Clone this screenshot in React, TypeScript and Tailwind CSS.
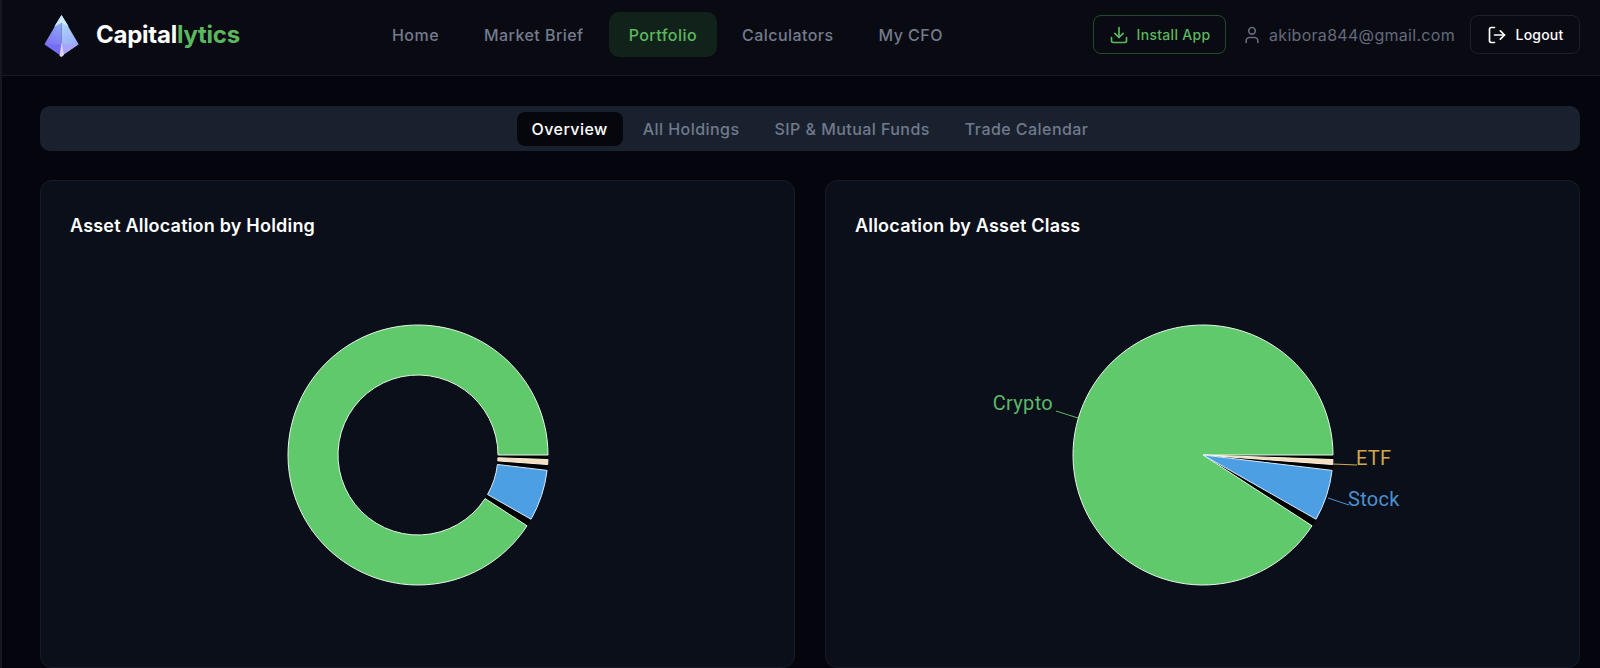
import { Download, LogOut, User } from 'lucide-react'

const CX = 150
const CY = 150
const GREEN = '#60c96c'
const BLUE = '#4c9fe3'

const NAV = ['Home', 'Market Brief', 'Portfolio', 'Calculators', 'My CFO']
const TABS = ['Overview', 'All Holdings', 'SIP & Mutual Funds', 'Trade Calendar']

/* slices in degrees, clockwise from 3 o'clock */
const SLICES = [
  { from: 33, to: 360, fill: GREEN, stroke: '#e6f6e7' },
  { from: 2, to: 4.2, fill: '#f0dfc0', stroke: '#fff4df' },
  { from: 6.8, to: 29.6, fill: BLUE, stroke: '#d8ebfb' },
]
const GAPS = [
  { from: 0, to: 2 },
  { from: 4.2, to: 6.8 },
  { from: 29.6, to: 33 },
]

function pt(r: number, deg: number) {
  const a = (deg * Math.PI) / 180
  return `${(CX + r * Math.cos(a)).toFixed(2)} ${(CY + r * Math.sin(a)).toFixed(2)}`
}

function slicePath(inner: number, outer: number, from: number, to: number) {
  const large = to - from > 180 ? 1 : 0
  if (inner === 0) {
    return `M${CX} ${CY} L${pt(outer, from)} A${outer} ${outer} 0 ${large} 1 ${pt(outer, to)} Z`
  }
  return `M${pt(inner, from)} L${pt(outer, from)} A${outer} ${outer} 0 ${large} 1 ${pt(outer, to)} L${pt(inner, to)} A${inner} ${inner} 0 ${large} 0 ${pt(inner, from)} Z`
}

function PieShape({ inner }: { inner: number }) {
  return (
    <>
      {GAPS.map((g) => (
        <path key={g.from} d={slicePath(inner, 130, g.from, g.to)} fill="#000" />
      ))}
      {SLICES.map((s) => (
        <path key={s.from} d={slicePath(inner, 130, s.from, s.to)} fill={s.fill} stroke={s.stroke} strokeWidth="1" />
      ))}
    </>
  )
}

function Logo() {
  return (
    <svg width="36" height="42" viewBox="0 0 36 43" className="mt-[2px] shrink-0">
      <defs>
        <linearGradient id="lg-left" x1="0.5" y1="0" x2="0.3" y2="1">
          <stop offset="0" stopColor="#8fb4f8" />
          <stop offset="1" stopColor="#7a5cf2" />
        </linearGradient>
        <linearGradient id="lg-right" x1="0.5" y1="0" x2="0.7" y2="1">
          <stop offset="0" stopColor="#b5ddfb" />
          <stop offset="1" stopColor="#8f9df7" />
        </linearGradient>
      </defs>
      <polygon points="17.5,0 0,30 17.5,42" fill="url(#lg-left)" />
      <polygon points="17.5,0 35,30 17.5,42" fill="url(#lg-right)" />
      <polygon points="17.5,0 10,12 17.5,8 25,12" fill="#cfeafc" />
      <polygon points="0,30 17.5,42 17.5,30" fill="#7170f6" />
      <polygon points="35,30 17.5,42 17.5,30" fill="#a8a4f9" />
      <polygon points="17.5,28 15.5,42 17.5,43 20,41" fill="#e0d2fc" />
    </svg>
  )
}

export default function App() {
  return (
    <div className="box-border h-[668px] w-[1600px] overflow-hidden border-l-2 border-[#16181f] bg-[#05060d] font-['Inter',sans-serif]">
      <header className="flex h-[76px] items-center border-b border-[#171a28] bg-[#090a12] pb-[6px] pl-[42px] pr-5">
        <div className="flex w-[328px] items-center gap-4">
          <Logo />
          <span className="text-[24px] font-bold tracking-[-0.25px] text-white">
            Capital<span className="text-[#5cb85f]">lytics</span>
          </span>
        </div>
        <nav className="flex items-center gap-[5px]">
          {NAV.map((item) => (
            <a
              key={item}
              className={
                item === 'Portfolio'
                  ? 'flex h-[45px] items-center rounded-[10px] bg-[#11221a] px-5 text-[16px] font-medium tracking-[0.45px] text-[#5cb85f]'
                  : 'flex h-[45px] items-center rounded-[10px] px-5 text-[16px] font-medium tracking-[0.45px] text-[#737b8c]'
              }
            >
              {item}
            </a>
          ))}
        </nav>
        <div className="ml-auto flex items-center">
          <button className="flex h-[39px] w-[133px] items-center justify-center gap-2 rounded-lg border border-[#244a2c] text-[14px] font-medium tracking-[0.3px] text-[#5cb85f]">
            <Download size={20} />
            Install App
          </button>
          <div className="ml-4 flex items-center gap-[7px] text-[16px] tracking-[0.3px] text-[#646b7c]">
            <User size={20} />
            akibora844@gmail.com
          </div>
          <button className="ml-[15px] flex h-[39px] w-[110px] items-center justify-center gap-[9px] rounded-lg border border-[#1c1f2c] text-[14px] font-medium tracking-[0.2px] text-white">
            <LogOut size={20} />
            Logout
          </button>
        </div>
      </header>

      <main className="pl-[38px] pr-5 pt-[30px]">
        <div className="flex h-[45px] items-center justify-center gap-[5px] rounded-[10px] bg-[#1a212e]">
          {TABS.map((tab) => (
            <a
              key={tab}
              className={
                tab === 'Overview'
                  ? 'flex h-[34px] items-center rounded-lg bg-[#05070d] px-[15px] text-[16px] font-medium tracking-[0.45px] text-white'
                  : 'flex h-[34px] items-center rounded-lg px-[15px] text-[16px] font-medium tracking-[0.45px] text-[#707a8c]'
              }
            >
              {tab}
            </a>
          ))}
        </div>

        <div className="mt-[29px] grid grid-cols-2 gap-[30px]">
          <section className="h-[488px] rounded-xl border border-[#161c28] bg-[#0a0f1a] p-[29px] pt-[32px]">
            <h2 className="text-[18px] leading-[26px] font-semibold tracking-[0.2px] text-white">Asset Allocation by Holding</h2>
            <div className="mt-[66px] flex justify-center">
              <svg width="300" height="300" viewBox="0 0 300 300">
                <PieShape inner={80} />
              </svg>
            </div>
          </section>

          <section className="h-[488px] rounded-xl border border-[#161c28] bg-[#0a0f1a] p-[29px] pt-[32px]">
            <h2 className="text-[18px] leading-[26px] font-semibold tracking-[0.2px] text-white">Allocation by Asset Class</h2>
            <div className="mt-[66px] flex justify-center">
              <svg width="500" height="300" viewBox="-100 0 500 300" className="font-['Roboto',sans-serif] text-[20px] tracking-[0.3px]">
                <PieShape inner={0} />
                <polyline points="3,106 25,113" fill="none" stroke="#5cb868" strokeWidth="1" />
                <polyline points="280,159 304,160" fill="none" stroke="#d0a94a" strokeWidth="1" />
                <polyline points="275,193 296,200" fill="none" stroke="#4a90d0" strokeWidth="1" />
                <text x="0" y="105" textAnchor="end" fill="#5cb868">Crypto</text>
                <text x="303" y="160" fill="#d0a94a">ETF</text>
                <text x="295" y="201" fill="#4a90d0">Stock</text>
              </svg>
            </div>
          </section>
        </div>
      </main>
    </div>
  )
}
